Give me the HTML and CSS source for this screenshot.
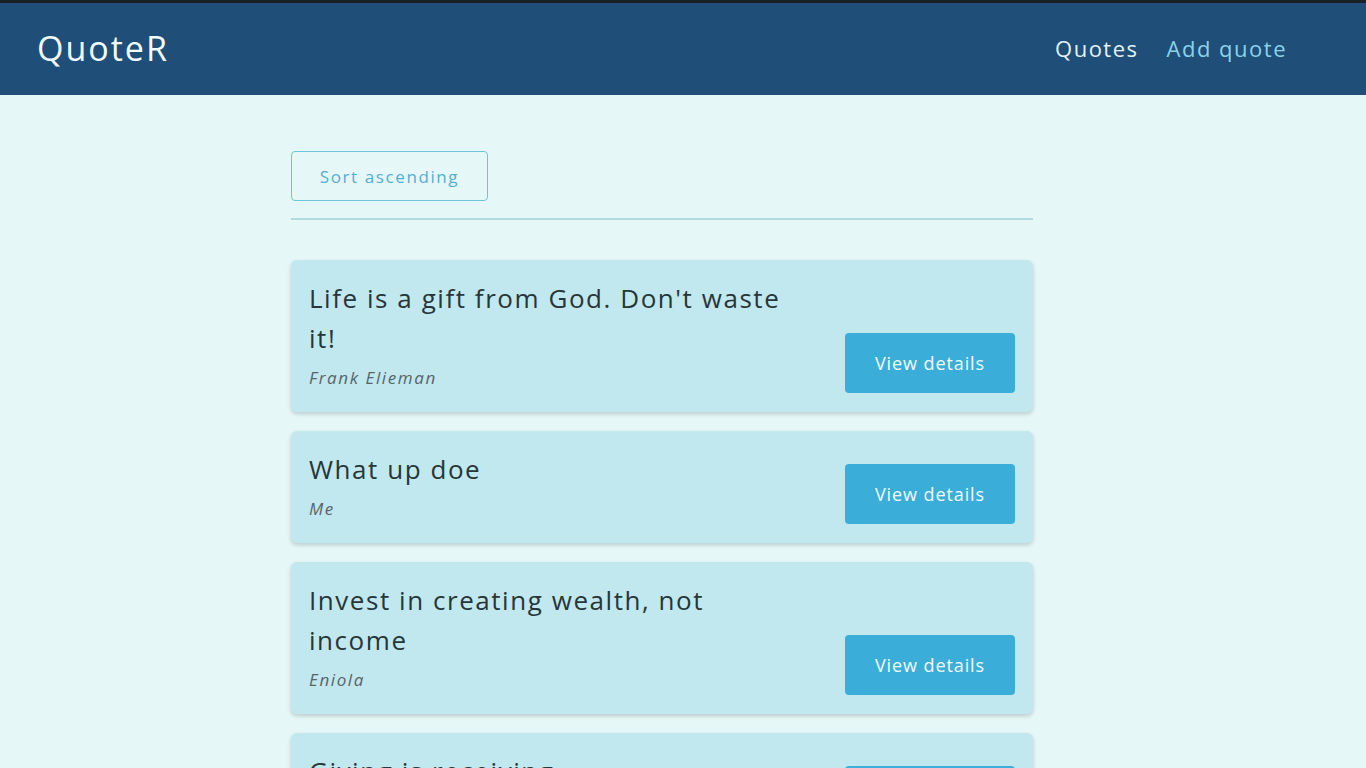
FILE: index.html
```html
<!DOCTYPE html>
<html lang="en">
<head>
<meta charset="utf-8">
<title>QuoteR</title>
<link rel="stylesheet" href="styles.css">
</head>
<body>
<header class="header">
  <div class="logo">QuoteR</div>
  <nav class="nav">
    <a class="nav-link" href="#">Quotes</a>
    <a class="nav-link active" href="#">Add quote</a>
  </nav>
</header>
<main class="main">
  <div class="sorting">
    <button class="sort-btn">Sort ascending</button>
  </div>
  <ul class="list">
    <li class="card">
      <div class="card-text">
        <p class="quote">Life is a gift from God. Don't waste it!</p>
        <p class="author">Frank Elieman</p>
      </div>
      <a class="btn" href="#">View details</a>
    </li>
    <li class="card">
      <div class="card-text">
        <p class="quote">What up doe</p>
        <p class="author">Me</p>
      </div>
      <a class="btn" href="#">View details</a>
    </li>
    <li class="card">
      <div class="card-text">
        <p class="quote">Invest in creating wealth, not income</p>
        <p class="author">Eniola</p>
      </div>
      <a class="btn" href="#">View details</a>
    </li>
    <li class="card">
      <div class="card-text">
        <p class="quote">Giving is receiving</p>
        <p class="author">Anonymous</p>
      </div>
      <a class="btn" href="#">View details</a>
    </li>
  </ul>
</main>
</body>
</html>
```
FILE: styles.css
```css
* { box-sizing: border-box; }
html, body { margin: 0; padding: 0; }
body {
  background: #e6f7f8;
  font-family: "Open Sans", "DejaVu Sans", sans-serif;
  height: 768px;
  overflow: hidden;
}
.header {
  height: 95px;
  background: #1f4e78;
  border-top: 3px solid #1a1f24;
  display: flex;
  align-items: center;
  justify-content: space-between;
  padding: 0 79px 0 37px;
}
.logo {
  color: #f2fbfd;
  font-size: 34px;
  letter-spacing: 2px;
  margin-top: -3px;
}
.nav {
  display: flex;
  gap: 28px;
  margin-top: -3px;
}
.nav-link {
  color: #e3f2f6;
  text-decoration: none;
  font-size: 22px;
  letter-spacing: 1.5px;
}
.nav-link.active { color: #8ad2ea; }
.main {
  width: 742px;
  margin: 0 0 0 291px;
  padding-top: 56px;
}
.sorting {
  padding-bottom: 17px;
  border-bottom: 2px solid #b0dce0;
}
.sort-btn {
  width: 197px;
  height: 50px;
  background: transparent;
  border: 1px solid #6cc3dc;
  border-radius: 4px;
  color: #52b0d2;
  font-family: inherit;
  font-size: 17px;
  letter-spacing: 1.6px;
}
.list {
  list-style: none;
  margin: 40px 0 0;
  padding: 0;
  display: flex;
  flex-direction: column;
  gap: 19px;
}
.card {
  background: #c1e8ef;
  border-radius: 6px;
  box-shadow: 0 2px 4px rgba(0, 0, 0, 0.18);
  padding: 18px 18px 19px 18px;
  display: flex;
  justify-content: space-between;
  align-items: flex-end;
}
.card-text {
  width: 490px;
  padding-bottom: 3px;
}
.quote {
  margin: 0;
  font-size: 26px;
  line-height: 40px;
  letter-spacing: 1.55px;
  color: #273638;
}
.author {
  margin: 8px 0 0;
  font-size: 17px;
  line-height: 24px;
  letter-spacing: 1.6px;
  font-style: italic;
  color: #596468;
}
.btn {
  width: 170px;
  height: 60px;
  background: #3aaed8;
  border-radius: 4px;
  color: #f3fbfe;
  text-decoration: none;
  font-size: 18px;
  font-weight: 500;
  letter-spacing: 0.9px;
  display: flex;
  align-items: center;
  justify-content: center;
}
```
